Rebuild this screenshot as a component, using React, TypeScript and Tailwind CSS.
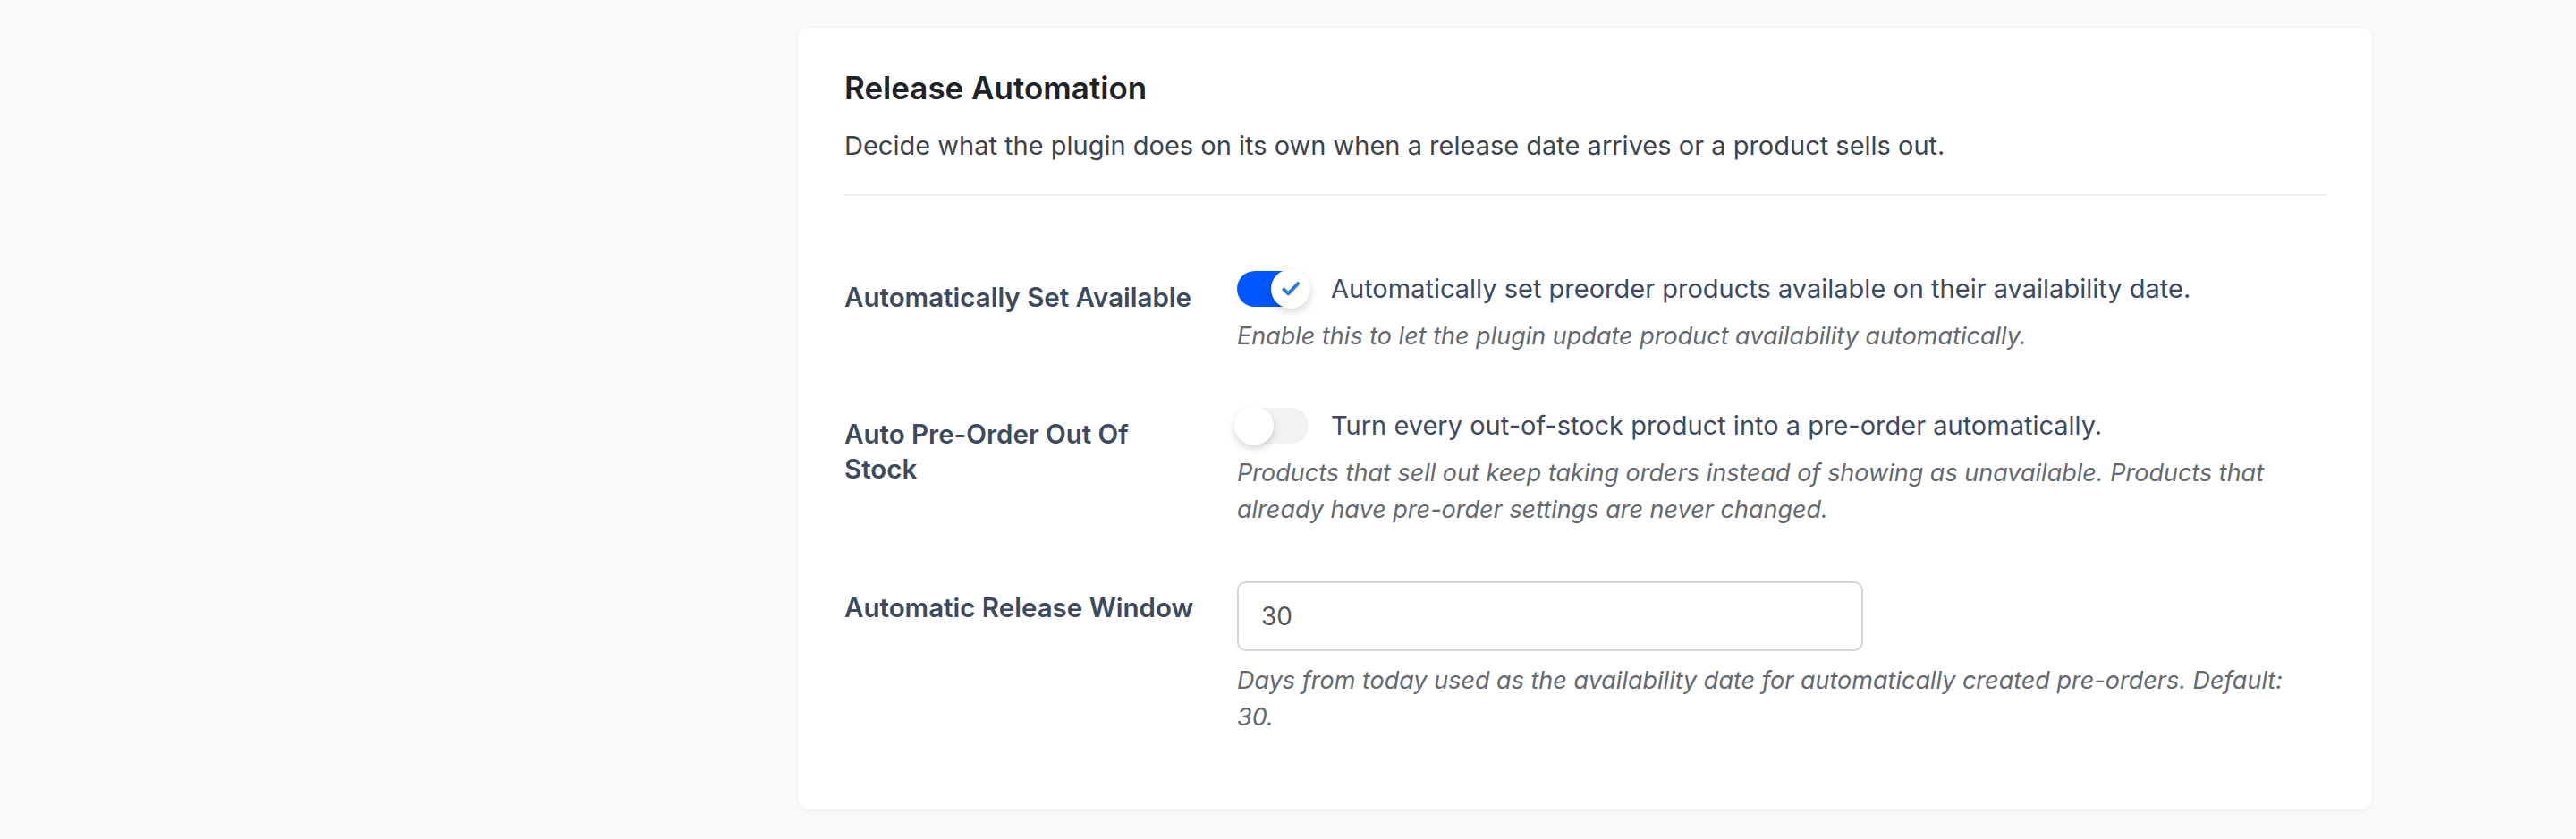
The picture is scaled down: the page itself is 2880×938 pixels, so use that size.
import { useState } from "react";

type ToggleProps = { on: boolean; onChange: (v: boolean) => void };

function Toggle({ on, onChange }: ToggleProps) {
  return (
    <button
      type="button"
      onClick={() => onChange(!on)}
      className={`relative h-[40px] w-[80px] shrink-0 rounded-full ${on ? "bg-[#0057ff]" : "bg-[#f0f2f4]"}`}
    >
      <span
        className={`absolute top-[-2px] flex h-[44px] w-[44px] items-center justify-center rounded-full bg-white shadow-[0_4px_8px_rgba(0,0,0,0.16)] ${on ? "left-[38px]" : "left-[-3px]"}`}
      >
        {on && (
          <svg width="26" height="26" viewBox="0 0 24 24" fill="none">
            <path d="M5 12.5l4.5 4.5L19.5 6.5" stroke="#2f7bd0" strokeWidth="3.6" strokeLinecap="round" strokeLinejoin="round" />
          </svg>
        )}
      </span>
    </button>
  );
}

function Help({ children }: { children: React.ReactNode }) {
  return <p className="mt-[12px] max-w-[1190px] text-[27px] italic leading-[41px] text-[#646970]">{children}</p>;
}

export default function App() {
  const [autoAvailable, setAutoAvailable] = useState(true);
  const [autoPreorder, setAutoPreorder] = useState(false);
  const [windowDays, setWindowDays] = useState("30");

  return (
    <div className="min-h-[938px] bg-[#f8f9fb] pl-[892px] pr-[228px] pt-[31px] font-['Inter',sans-serif]">
      <section className="rounded-[12px] bg-white pb-[83px] pl-[52px] pr-[50px] pt-[45px] shadow-[0_1px_4px_rgba(0,0,0,0.06)]">
        {/* Header */}
        <h2 className="text-[35px] font-semibold leading-[44px] text-[#1d2327]">Release Automation</h2>
        <p className="mt-[23px] text-[29px] leading-[40px] text-[#3c434a]">
          Decide what the plugin does on its own when a release date arrives or a product sells out.
        </p>
        <div className="mt-[34px] h-[2px] bg-[#f0f0f1]" />

        {/* Settings rows */}
        <div className="mt-[84px] flex flex-col gap-[60px]">
          <div className="grid grid-cols-[439px_1fr]">
            <div className="pr-[46px] pt-[10px] text-[29.5px] font-semibold leading-[39px] text-[#3d4a5d]">
              Automatically Set Available
            </div>
            <div>
              <label className="flex h-[40px] items-center gap-[25px]">
                <Toggle on={autoAvailable} onChange={setAutoAvailable} />
                <span className="text-[29px] leading-[40px] text-[#3d4a5d]">
                  Automatically set preorder products available on their availability date.
                </span>
              </label>
              <Help>Enable this to let the plugin update product availability automatically.</Help>
            </div>
          </div>

          <div className="grid grid-cols-[439px_1fr]">
            <div className="pr-[46px] pt-[10px] text-[29.5px] font-semibold leading-[39px] text-[#3d4a5d]">
              Auto Pre-Order Out Of Stock
            </div>
            <div>
              <label className="flex h-[40px] items-center gap-[25px]">
                <Toggle on={autoPreorder} onChange={setAutoPreorder} />
                <span className="text-[29px] leading-[40px] text-[#3d4a5d]">
                  Turn every out-of-stock product into a pre-order automatically.
                </span>
              </label>
              <Help>
                Products that sell out keep taking orders instead of showing as unavailable. Products that already have
                pre-order settings are never changed.
              </Help>
            </div>
          </div>

          <div className="grid grid-cols-[439px_1fr]">
            <div className="pr-[46px] pt-[10px] text-[29.5px] font-semibold leading-[39px] text-[#3d4a5d]">
              Automatic Release Window
            </div>
            <div>
              <input
                type="number"
                value={windowDays}
                onChange={(e) => setWindowDays(e.target.value)}
                className="block h-[78px] w-[700px] rounded-[10px] border-2 border-[#d4d6d9] bg-white px-[25px] text-[28px] text-[#50575e] outline-none [appearance:textfield] [&::-webkit-inner-spin-button]:appearance-none"
              />
              <Help>
                Days from today used as the availability date for automatically created pre-orders. Default: 30.
              </Help>
            </div>
          </div>
        </div>
      </section>
    </div>
  );
}
